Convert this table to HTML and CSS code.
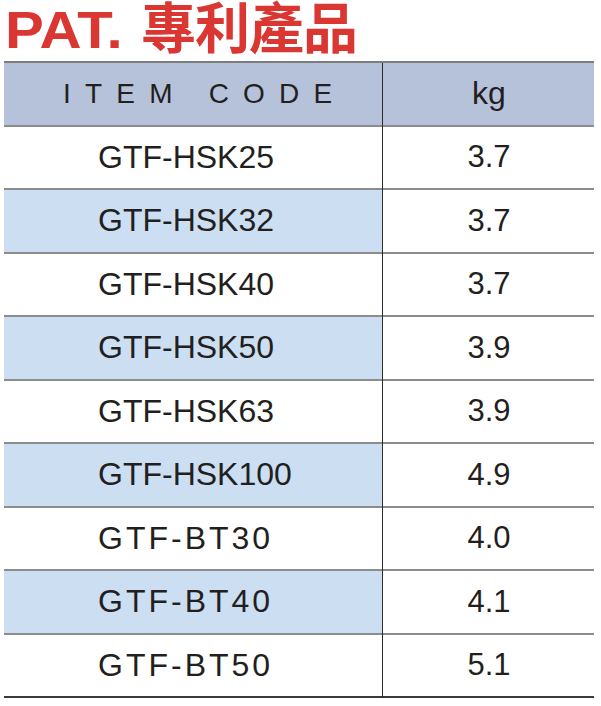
FILE: index.html
```html
<!DOCTYPE html>
<html lang="zh-Hant">
<head>
<meta charset="utf-8">
<title>PAT. 專利產品</title>
<link rel="stylesheet" href="styles.css">
</head>
<body>
<div class="title">
  <span class="pat">PAT.</span>
  <span class="cjk">專利產品</span>
</div>
<div class="table">
  <div class="row head">
    <div class="cell code">ITEM CODE</div>
    <div class="cell kg">kg</div>
  </div>
  <div class="row">
    <div class="cell code">GTF-HSK25</div>
    <div class="cell kg">3.7</div>
  </div>
  <div class="row alt">
    <div class="cell code">GTF-HSK32</div>
    <div class="cell kg">3.7</div>
  </div>
  <div class="row">
    <div class="cell code">GTF-HSK40</div>
    <div class="cell kg">3.7</div>
  </div>
  <div class="row alt">
    <div class="cell code">GTF-HSK50</div>
    <div class="cell kg">3.9</div>
  </div>
  <div class="row">
    <div class="cell code">GTF-HSK63</div>
    <div class="cell kg">3.9</div>
  </div>
  <div class="row alt">
    <div class="cell code">GTF-HSK100</div>
    <div class="cell kg">4.9</div>
  </div>
  <div class="row">
    <div class="cell code wide">GTF-BT30</div>
    <div class="cell kg">4.0</div>
  </div>
  <div class="row alt">
    <div class="cell code wide">GTF-BT40</div>
    <div class="cell kg">4.1</div>
  </div>
  <div class="row last">
    <div class="cell code wide">GTF-BT50</div>
    <div class="cell kg">5.1</div>
  </div>
</div>
</body>
</html>
```
FILE: styles.css
```css
html, body {
  margin: 0;
  padding: 0;
  background: #ffffff;
}

body {
  font-family: "Liberation Sans", Arial, sans-serif;
  color: #231f20;
  width: 601px;
}

.title {
  height: 61px;
  display: flex;
  align-items: baseline;
  padding-left: 5px;
  box-sizing: border-box;
  color: #da3733;
}

.pat {
  display: inline-block;
  font-family: "Liberation Sans", Arial, sans-serif;
  font-weight: 700;
  font-size: 52px;
  line-height: 1;
  transform: scaleX(1.12);
  transform-origin: left center;
  margin-right: 31px;
}

.cjk {
  font-family: "Noto Sans CJK TC", "Noto Sans CJK SC", sans-serif;
  font-weight: 700;
  font-size: 55px;
  line-height: 0.9;
  letter-spacing: -1px;
}

.table {
  position: relative;
  margin-left: 4px;
  width: 590px;
  border-top: 2px solid #7d7d7d;
}

.table::after {
  content: "";
  position: absolute;
  left: 378px;
  top: 0;
  bottom: 0;
  width: 1px;
  background: #2b2b2b;
}

.row {
  display: grid;
  grid-template-columns: 378px 1fr;
  height: 63.5px;
  box-sizing: border-box;
  border-bottom: 2px solid #8c8c8c;
}

.row.last {
  border-bottom-color: #3a3a3a;
}

.cell {
  display: flex;
  align-items: center;
  font-size: 32px;
}

.code {
  padding-left: 94px;
}

.code.wide {
  letter-spacing: 3px;
}

.kg {
  justify-content: center;
  font-size: 31px;
  padding-left: 2px;
}

.alt .code {
  background: #cbdef2;
}

.head {
  background: #b6c2d9;
}

.head .code {
  padding-left: 59px;
  font-size: 28px;
  letter-spacing: 14.2px;
  padding-top: 1px;
}

.head .kg {
  font-size: 32px;
}
```
